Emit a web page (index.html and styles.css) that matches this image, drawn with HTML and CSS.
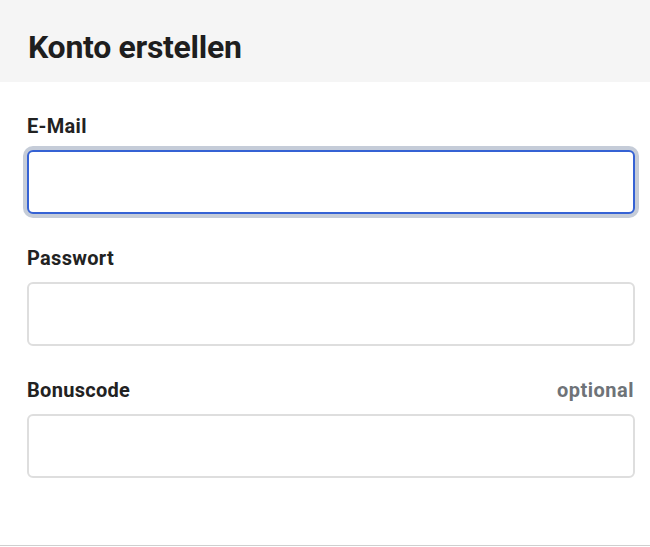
FILE: index.html
```html
<!DOCTYPE html>
<html lang="de">
<head>
<meta charset="utf-8">
<title>Konto erstellen</title>
<link rel="stylesheet" href="styles.css">
</head>
<body>
<div class="panel">
  <header class="head">
    <h1 class="title">Konto erstellen</h1>
  </header>
  <form class="form">
    <div class="field">
      <div class="label-row"><label class="label" for="email">E-Mail</label></div>
      <input class="input input-focus" id="email" type="email">
    </div>
    <div class="field">
      <div class="label-row"><label class="label" for="pw">Passwort</label></div>
      <input class="input" id="pw" type="password">
    </div>
    <div class="field">
      <div class="label-row"><label class="label" for="bonus">Bonuscode</label><span class="hint">optional</span></div>
      <input class="input" id="bonus" type="text">
    </div>
  </form>
</div>
</body>
</html>
```
FILE: styles.css
```css
html, body {
  margin: 0;
  padding: 0;
  background: #ffffff;
}
body {
  font-family: "Roboto", "Liberation Sans", sans-serif;
  color: #222222;
}
.panel {
  width: 650px;
  height: 547px;
  display: flex;
  flex-direction: column;
}
.head {
  height: 82px;
  background: #f5f5f5;
  padding: 12px 28px 0;
  display: flex;
  align-items: center;
  box-sizing: border-box;
}
.title {
  margin: 0;
  font-size: 32px;
  line-height: 40px;
  font-weight: 700;
  color: #1e1e1e;
  letter-spacing: -0.3px;
}
.form {
  height: 464px;
  box-sizing: border-box;
  border-bottom: 1px solid #cfcfcf;
  padding: 32px 15px 0 27px;
  display: flex;
  flex-direction: column;
}
.field {
  display: flex;
  flex-direction: column;
  margin-bottom: 32px;
}
.label-row {
  display: flex;
  justify-content: space-between;
  align-items: center;
  height: 24px;
  margin-bottom: 12px;
}
.label {
  font-size: 20px;
  font-weight: 700;
  color: #222222;
  letter-spacing: 0.3px;
}
.hint {
  font-size: 20px;
  font-weight: 700;
  color: #6e7378;
  letter-spacing: 0.5px;
  margin-right: 1px;
}
.input {
  height: 64px;
  box-sizing: border-box;
  border: 2px solid #dedede;
  border-radius: 6px;
  background: #ffffff;
  font: inherit;
  outline: none;
  margin: 0;
  padding: 0 12px;
}
.input-focus {
  border-color: #3562d4;
  box-shadow: 0 0 0 4px #c5ccd8;
}
```
